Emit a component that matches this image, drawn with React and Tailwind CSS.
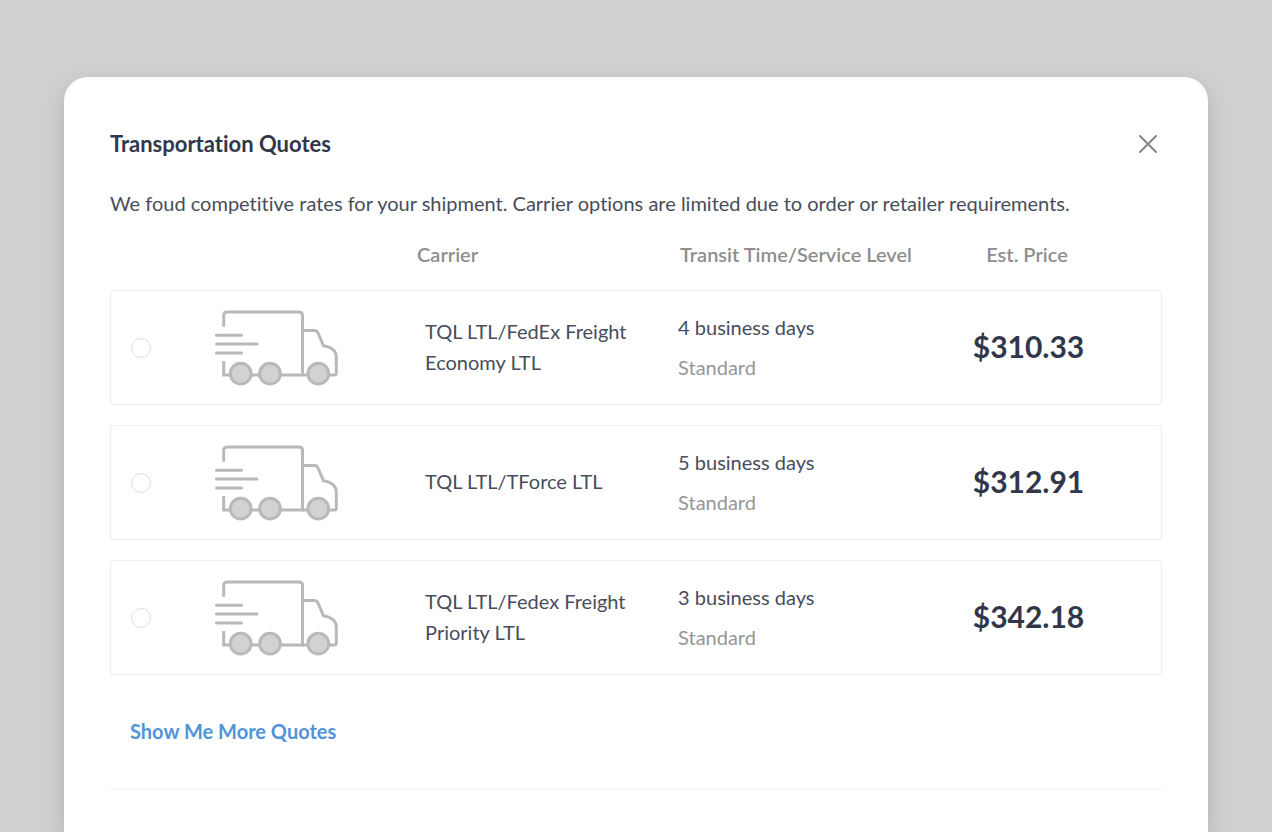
import React from "react";

const quotes = [
    {
        id: "fedex-economy",
        carrier: ["TQL LTL/FedEx Freight", "Economy LTL"],
        transit: "4 business days",
        level: "Standard",
        price: "$310.33",
    },
    {
        id: "tforce",
        carrier: ["TQL LTL/TForce LTL"],
        transit: "5 business days",
        level: "Standard",
        price: "$312.91",
    },
    {
        id: "fedex-priority",
        carrier: ["TQL LTL/Fedex Freight", "Priority LTL"],
        transit: "3 business days",
        level: "Standard",
        price: "$342.18",
    },
];

function TruckIcon() {
    return (
        <svg
            className="block h-[78px] w-[125px]"
            viewBox="0 0 125 78"
            fill="none"
            stroke="#b9b9b9"
            strokeWidth="3"
            strokeLinecap="round"
            aria-hidden="true"
        >
            {/* Cargo box */}
            <path d="M8.7 16.5V6.5Q8.7 3 12.2 3H84Q87.5 3 87.5 6.5V66" />
            <path d="M8.7 53.5V66H14M36 66H44M66 66H92" strokeLinecap="square" />
            {/* Cab */}
            <path d="M87.5 21.5H99.5Q102 21.5 103 24L108.5 36.8C116 38 121.3 41 121.3 48.5V64Q121.3 66 119.3 66H115" />
            {/* Speed lines */}
            <path d="M1.5 26.3H26.5M1.5 35.1H42M1.5 44H26.5" />
            {/* Wheels */}
            <g fill="#d2d2d2">
                <circle cx="25.7" cy="64.7" r="10.4" />
                <circle cx="55" cy="64.7" r="10.4" />
                <circle cx="103.3" cy="64.7" r="10.4" />
            </g>
        </svg>
    );
}

function QuoteRow({ quote }) {
    return (
        <tr className="h-[115px]">
            <td className="rounded-l-sm border-y border-l border-[#eeeeee] pl-5">
                <input
                    type="radio"
                    name="quote"
                    value={quote.id}
                    aria-label={quote.carrier.join(" ")}
                    className="block size-5 appearance-none rounded-full border border-[#dedede] bg-white checked:border-[6px] checked:border-[#4a90d9]"
                />
            </td>
            <td className="border-y border-[#eeeeee]">
                <TruckIcon />
            </td>
            <td className="border-y border-[#eeeeee] pb-0.5 pl-2.5 leading-[31px]">
                {quote.carrier.map((line) => (
                    <span key={line} className="block">
                        {line}
                    </span>
                ))}
            </td>
            <td className="border-y border-[#eeeeee] pb-0.5 leading-10">
                <span className="block">{quote.transit}</span>
                <span className="block text-[#969696]">{quote.level}</span>
            </td>
            <td className="rounded-r-sm border-y border-r border-[#eeeeee] pr-6 pb-1 text-center text-[30px] leading-10 font-bold text-[#30374a]">
                {quote.price}
            </td>
        </tr>
    );
}

export default function App() {
    return (
        <div className="min-h-screen bg-[#d0d1d3] px-16 pt-[77px] font-['Lato',sans-serif] text-[20px] text-[#474d5c] [font-variant-ligatures:none]">
            <main className="min-h-[calc(100vh-77px)] rounded-t-3xl bg-white px-[46px] pt-[51px] shadow-[0_8px_22px_rgba(110,105,100,0.32)]">
                {/* Header */}
                <header className="flex h-8 items-center justify-between">
                    <h1 className="text-[22px] leading-8 font-bold text-[#30374a]">
                        Transportation Quotes
                    </h1>
                    <button type="button" aria-label="Close" className="p-1">
                        <svg
                            className="block size-5"
                            viewBox="0 0 20 20"
                            fill="none"
                            stroke="#858585"
                            strokeWidth="2"
                            strokeLinecap="round"
                            aria-hidden="true"
                        >
                            <path d="M2 2L18 18M18 2L2 18" />
                        </svg>
                    </button>
                </header>

                <p className="mt-7 leading-[30px]">
                    We foud competitive rates for your shipment. Carrier options
                    are limited due to order or retailer requirements.
                </p>

                {/* Quotes */}
                <table className="w-full table-fixed border-separate border-spacing-x-0 border-spacing-y-5 text-left">
                    <thead>
                        <tr className="h-8 leading-8 whitespace-nowrap text-[#8e8e8e]">
                            <td className="w-[10%]"></td>
                            <td className="w-[19%]"></td>
                            <th scope="col" className="w-[25%] pl-0.5 font-semibold">
                                Carrier
                            </th>
                            <th scope="col" className="w-[23%] pl-0.5 font-semibold">
                                Transit Time/Service Level
                            </th>
                            <th scope="col" className="w-[23%] pr-7 text-center font-semibold">
                                Est. Price
                            </th>
                        </tr>
                    </thead>
                    <tbody>
                        {quotes.map((quote) => (
                            <QuoteRow key={quote.id} quote={quote} />
                        ))}
                    </tbody>
                </table>

                <div className="border-b-2 border-[#f7f7f7] px-5 pt-5 pb-[41px]">
                    <a href="#more" className="block w-fit leading-8 font-bold text-[#5193d9]">
                        Show Me More Quotes
                    </a>
                </div>
            </main>
        </div>
    );
}
